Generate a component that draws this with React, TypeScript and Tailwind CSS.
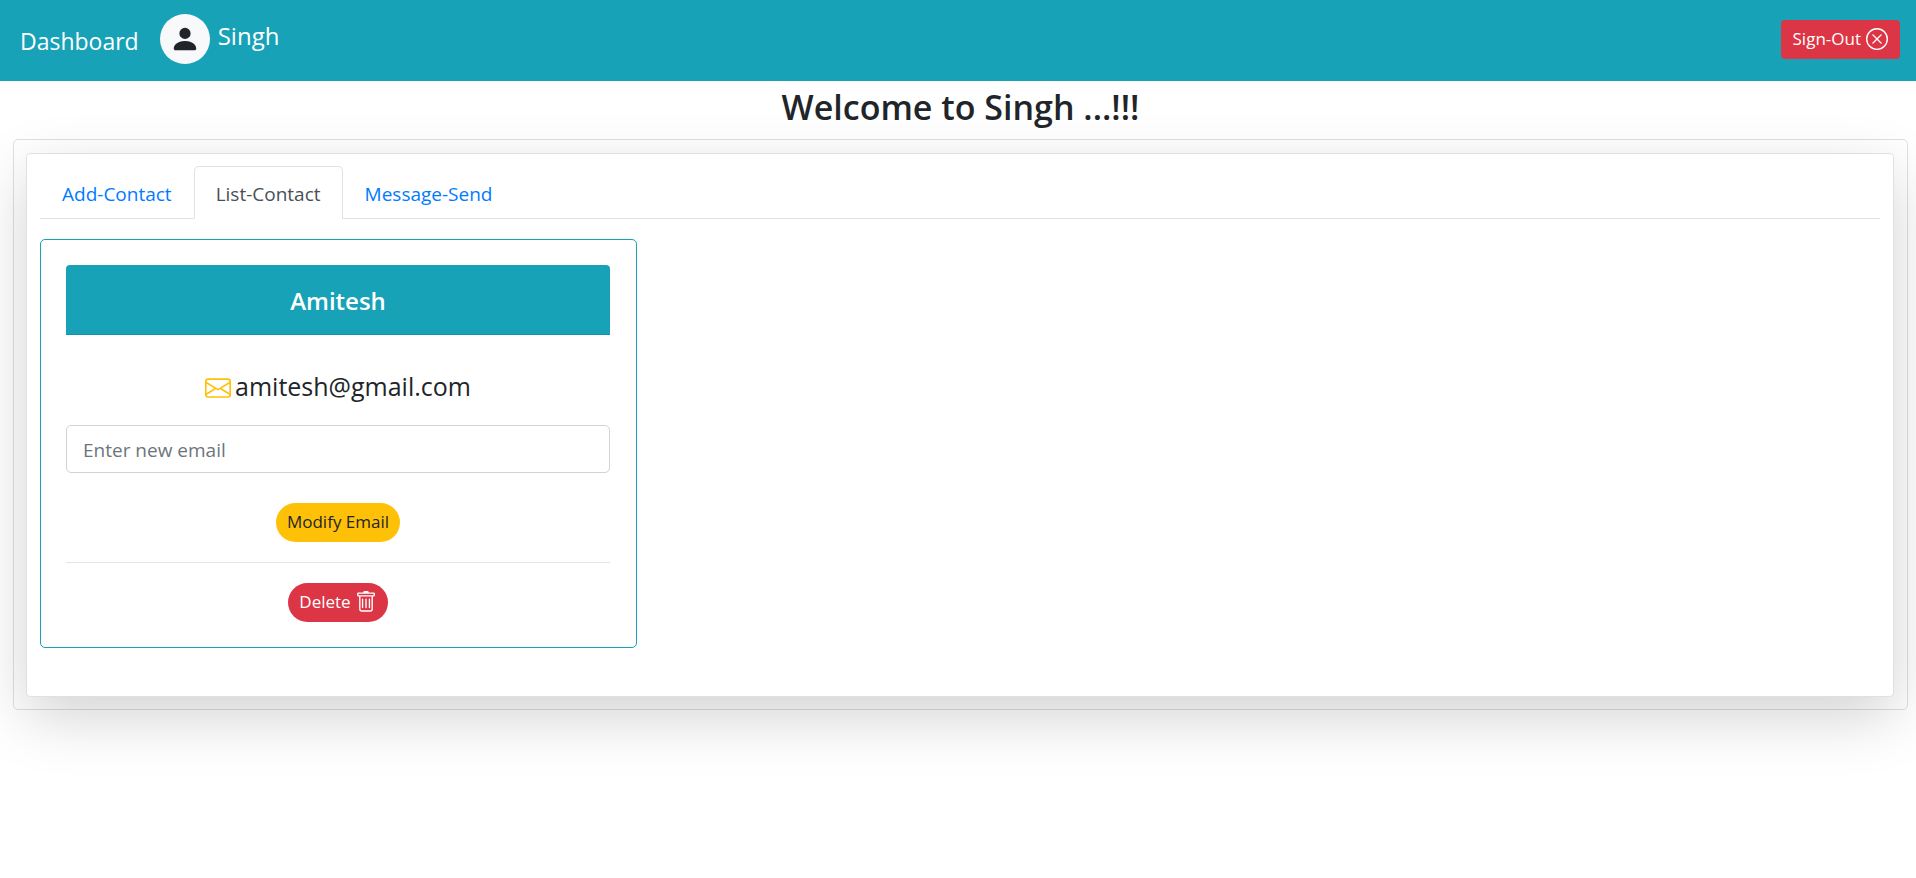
import { useState } from "react";
import { BsEnvelope, BsPersonFill, BsTrash, BsXCircle } from "react-icons/bs";

const tabs = ["Add-Contact", "List-Contact", "Message-Send"];

function Navbar() {
  return (
    <nav className="flex h-[81px] items-center bg-[#17a2b8] pr-4 pl-5 text-white">
      <a href="#dashboard" className="mr-[21px] pt-0.5 text-[23px]">Dashboard</a>
      <a href="#profile" className="mb-1 flex items-center gap-2 text-2xl">
        <span className="flex size-[50px] items-center justify-center rounded-full bg-[#f8f9fa] text-[#212529]">
          <BsPersonFill size={30} />
        </span>
        <span className="mb-1.5">Singh</span>
      </a>
      <button type="button" className="mb-0.5 ml-auto flex h-[39px] items-center gap-[5px] rounded-[4px] bg-[#dc3545] px-3 pb-0.5 text-[17px]">
        Sign-Out <BsXCircle size={22} />
      </button>
    </nav>
  );
}

function ContactCard({ name, email }: { name: string; email: string }) {
  return (
    <article className="flex w-full max-w-[597px] flex-col items-center rounded-[5px] border border-[#17a2b8] py-[25px] pr-[26px] pl-[25px]">
      <h2 className="flex h-[70px] w-full items-center justify-center rounded-t-[4px] border-b border-[#1592a6] bg-[#17a2b8] pt-0.5 text-2xl font-semibold text-white">
        {name}
      </h2>
      <p className="mt-8 flex items-center gap-1 text-[25px] leading-[38px]">
        <BsEnvelope size={26} className="mt-1 text-[#ffc107]" />
        {email}
      </p>
      <input
        type="email"
        aria-label="New email"
        placeholder="Enter new email"
        className="mt-5 h-12 w-full rounded-[5px] border border-[#ced4da] px-4 pt-0.5 text-[19px] outline-none placeholder:text-[#6c757d]"
      />
      <button type="button" className="mt-[30px] h-[39px] rounded-[20px] bg-[#ffc107] px-[11px] pb-0.5 text-[17px]">
        Modify Email
      </button>
      <hr className="my-5 w-full border-black/10" />
      <button type="button" className="flex h-[39px] items-center gap-1 rounded-[20px] bg-[#dc3545] px-[11px] pb-0.5 text-[17px] text-white">
        Delete <BsTrash size={22} />
      </button>
    </article>
  );
}

export default function App() {
  const [active, setActive] = useState("List-Contact");
  return (
    <div className="min-h-screen bg-white font-['Open_Sans','Noto_Sans',sans-serif] text-[#212529]">
      <Navbar />
      <main className="pr-2 pl-[13px]">
        <h1 className="pt-0.5 pb-2 text-center text-[34px] leading-[48px] font-semibold">Welcome to Singh ...!!!</h1>
        <section className="rounded-[5px] border border-black/12 pt-[13px] pr-[13px] pb-3 pl-3">
          <div className="rounded-[5px] border border-black/12 bg-white px-[13px] pt-3 pb-12 shadow-[0_20px_60px_rgba(0,0,0,0.175)]">
            <div role="tablist" className="flex border-b border-[#dee2e6]">
              {tabs.map((tab) => (
                <button
                  key={tab}
                  type="button"
                  role="tab"
                  aria-selected={tab === active}
                  onClick={() => setActive(tab)}
                  className={
                    tab === active
                      ? "-mb-px h-[53px] rounded-t-[5px] border border-[#dee2e6] border-b-white bg-white px-[21px] pt-1 text-[19px] text-[#495057]"
                      : "-mb-px h-[53px] border border-transparent px-[21px] pt-1 text-[19px] text-[#007bff]"
                  }
                >
                  {tab}
                </button>
              ))}
            </div>
            <div role="tabpanel" aria-label={active} className="pt-5">
              <ContactCard name="Amitesh" email="amitesh@gmail.com" />
            </div>
          </div>
        </section>
      </main>
    </div>
  );
}
